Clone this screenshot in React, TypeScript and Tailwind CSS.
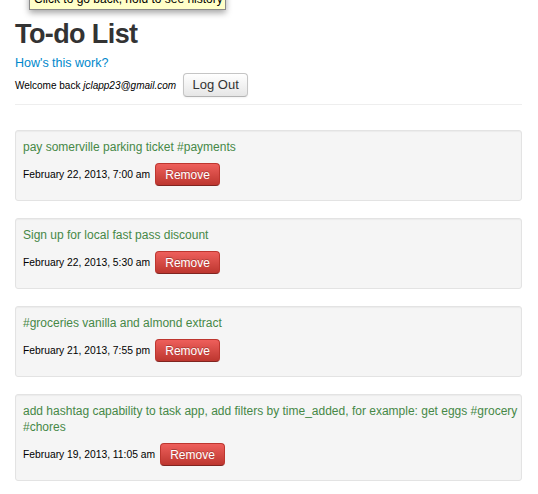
import React from "react";

const todos = [
  { text: "pay somerville parking ticket #payments", date: "February 22, 2013, 7:00 am" },
  { text: "Sign up for local fast pass discount", date: "February 22, 2013, 5:30 am" },
  { text: "#groceries vanilla and almond extract", date: "February 21, 2013, 7:55 pm" },
  {
    text: "add hashtag capability to task app, add filters by time_added, for example: get eggs #grocery #chores",
    date: "February 19, 2013, 11:05 am",
  },
];

const App = () => {
  return (
    <div className="relative min-h-[494px] w-[538px] overflow-hidden bg-white font-['Liberation_Sans',Arial,sans-serif] text-[#333]">
      {/* browser tooltip */}
      <div className="absolute left-[29px] top-[-9px] z-10 h-[19px] w-[197px] overflow-hidden whitespace-nowrap border border-[#8a8a8a] bg-[#ffffc8] px-[4px] text-[12px] leading-[15px] text-black shadow-[0_3px_6px_rgba(0,0,0,0.35)]">
        Click to go back, hold to see history
      </div>

      <div className="ml-[15px] w-[507px]">
        <h1 className="mt-[19px] text-[27px] font-bold leading-[30px] tracking-[-0.6px] text-[#333]">
          To-do List
        </h1>
        <a className="mt-[6px] block text-[12.5px] leading-[16px] text-[#0088cc]">How's this work?</a>

        <div className="mt-[2px] flex h-[24px] items-center gap-[7px]">
          <span className="text-[10px] text-black">
            Welcome back <i>jclapp23@gmail.com</i>
          </span>
          <button className="h-[24px] w-[65px] rounded-[4px] border border-[#c5c5c5] border-b-[#b3b3b3] bg-gradient-to-b from-white to-[#e6e6e6] text-[13px] text-[#333] shadow-[inset_0_1px_0_rgba(255,255,255,0.2),0_1px_2px_rgba(0,0,0,0.05)]">
            Log Out
          </button>
        </div>

        <div className="mt-[7px] border-t border-[#eeeeee]" />

        <div className="mt-[25px] flex flex-col gap-[17px]">
          {todos.map((t) => (
            <div
              key={t.date}
              className="rounded-[3px] border border-[#e3e3e3] bg-[#f5f5f5] pb-[14px] pl-[7px] pr-[2px] pt-[8px] shadow-[inset_0_1px_1px_rgba(0,0,0,0.04)]"
            >
              <div className="text-[12px] leading-[16px] text-[#468847]">{t.text}</div>
              <div className="mt-[8px] flex h-[23px] items-center gap-[5px]">
                <span className="text-[10.3px] text-black">{t.date}</span>
                <button className="h-[23px] w-[65px] rounded-[4px] border border-[#bd362f] border-b-[#802420] bg-gradient-to-b from-[#ee5f5b] to-[#bd362f] text-[12px] text-white [text-shadow:0_-1px_0_rgba(0,0,0,0.25)]">
                  Remove
                </button>
              </div>
            </div>
          ))}
        </div>
      </div>
    </div>
  );
};

export default App;
